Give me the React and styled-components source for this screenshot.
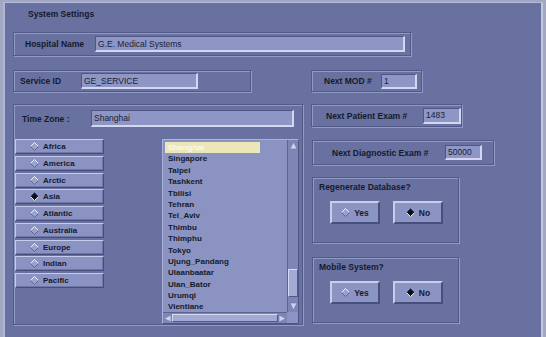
import React from "react";
import styled, { createGlobalStyle } from "styled-components";

const GlobalStyle = createGlobalStyle`
  html, body {
    margin: 0;
    padding: 0;
  }
  body {
    background: #a3a8c0;
    font-family: "Liberation Sans", Arial, sans-serif;
    font-size: 8.5px;
    color: #151a2c;
  }
`;

const Frame = styled.div`
  box-sizing: border-box;
  width: 540px;
  height: 335px;
  margin: 2px 0 0 3px;
  padding-left: 8px;
  background: #6871a0;
  border-top: 1px solid #b4bbe2;
  border-left: 2px solid #aeb5dc;
  border-right: 2px solid #c3c7db;
  display: flex;
  flex-direction: column;
`;

const Title = styled.div`
  margin: 6px 0 0 15px;
  line-height: 10px;
  font-weight: bold;
`;

const Etched = styled.div`
  box-sizing: border-box;
  width: ${(p) => p.$w}px;
  height: ${(p) => p.$h}px;
  margin: ${(p) => p.$mt || 0}px 0 0 ${(p) => p.$ml || 0}px;
  border: 1px solid #525a8a;
  box-shadow: 1px 1px 0 #9199c7, inset 1px 1px 0 #9199c7;
  flex-shrink: 0;
`;

const FieldBox = styled(Etched)`
  display: flex;
  align-items: center;
  padding-left: ${(p) => p.$pl}px;
`;

const Label = styled.span`
  width: ${(p) => p.$w}px;
  flex-shrink: 0;
  font-weight: bold;
  line-height: 10px;
  white-space: nowrap;
`;

const Input = styled.div`
  box-sizing: border-box;
  width: ${(p) => p.$w}px;
  height: ${(p) => p.$h || 16}px;
  padding-left: 2px;
  display: flex;
  align-items: center;
  background: #8d96c5;
  border-top: 1px solid #4f5786;
  border-left: 1px solid #4f5786;
  border-right: 2px solid #d3d8f0;
  border-bottom: 2px solid #d3d8f0;
  color: #1d2236;
  white-space: nowrap;
  overflow: hidden;
`;

const Row = styled.div`
  display: flex;
  align-items: flex-start;
  margin-top: ${(p) => p.$mt || 0}px;
`;

const Group = styled(Etched)`
  display: flex;
  flex-direction: column;
`;

const TzRow = styled.div`
  display: flex;
  align-items: center;
  height: 17px;
  margin: 5px 0 0 8px;
`;

const TzBody = styled.div`
  display: flex;
  align-items: flex-start;
  margin: 12px 0 0 1px;
`;

const RadioColumn = styled.div`
  display: flex;
  flex-direction: column;
  gap: 1.75px;
`;

const RadioTab = styled.div`
  box-sizing: border-box;
  width: 89px;
  height: 15px;
  display: flex;
  align-items: center;
  gap: 4px;
  padding-left: 14px;
  background: #8a93c2;
  border-top: 1px solid #c6cbeb;
  border-left: 1px solid #c6cbeb;
  border-right: 1px solid #454d7c;
  border-bottom: 1px solid #454d7c;
  box-shadow: inset -1px -1px 0 #6e77a7;
  font-size: 8px;
  font-weight: bold;
`;

const ListBox = styled.div`
  box-sizing: border-box;
  width: 137px;
  height: 185px;
  margin-left: 58px;
  display: grid;
  grid-template-columns: 1fr 11px;
  grid-template-rows: 1fr 11px;
  background: #8a93c1;
  border-top: 1px solid #aab2da;
  border-left: 1px solid #aab2da;
  border-right: 1px solid #4d5584;
  border-bottom: 1px solid #4d5584;
`;

const ListItems = styled.div`
  overflow: hidden;
  padding: 2px 0 0 2px;
`;

const ListItem = styled.div`
  width: 95px;
  height: 11.4px;
  line-height: 11.4px;
  padding-left: 3px;
  box-sizing: border-box;
  font-size: 8px;
  font-weight: bold;
  white-space: nowrap;
  background: ${(p) => (p.$sel ? "#ece7b8" : "transparent")};
  color: ${(p) => (p.$sel ? "#fbf8ea" : "#151a2c")};
`;

const VScroll = styled.div`
  display: flex;
  flex-direction: column;
  background: #7d86b4;
  border-left: 1px solid #5b6392;
`;

const HScroll = styled.div`
  display: flex;
  background: #7d86b4;
  border-top: 1px solid #5b6392;
`;

const Corner = styled.div`
  background: #8a93c1;
`;

const Arrow = styled.div`
  flex-shrink: 0;
  width: ${(p) => p.$w}px;
  height: ${(p) => p.$h}px;
  display: flex;
  align-items: center;
  justify-content: center;
`;

const Track = styled.div`
  flex: 1;
  display: flex;
  flex-direction: ${(p) => (p.$vertical ? "column" : "row")};
`;

const Thumb = styled.div`
  box-sizing: border-box;
  background: #a3abd5;
  border-top: 1px solid #d7dbf2;
  border-left: 1px solid #d7dbf2;
  border-right: 1px solid #4f5786;
  border-bottom: 1px solid #4f5786;
  ${(p) =>
    p.$vertical
      ? `margin-top: ${p.$offset}px; height: ${p.$size}px; width: 100%;`
      : `margin: 1px 0; flex: 1;`}
`;

const RightColumn = styled.div`
  display: flex;
  flex-direction: column;
  margin-left: 8px;
`;

const ChoiceGroup = styled(Etched)`
  padding: 4px 0 0 6px;
`;

const ChoiceRow = styled.div`
  display: flex;
  gap: 13px;
  margin: 9px 0 0 11px;
`;

const ChoiceButton = styled.div`
  box-sizing: border-box;
  width: 50px;
  height: 23px;
  display: flex;
  align-items: center;
  justify-content: center;
  gap: 4px;
  background: #8b94c3;
  border-top: 2px solid #c8cdec;
  border-left: 2px solid #c8cdec;
  border-right: 2px solid #474f7e;
  border-bottom: 2px solid #474f7e;
  font-weight: bold;
`;

const Diamond = ({ on }) => (
  <svg width="9" height="9" viewBox="0 0 9 9">
    <polygon
      points="4.5,0.5 8.5,4.5 4.5,8.5 0.5,4.5"
      fill={on ? "#101018" : "#9aa2cd"}
    />
    <polyline
      points="0.5,4.5 4.5,0.5 8.5,4.5"
      fill="none"
      stroke={on ? "#4a5080" : "#eef0fb"}
      strokeWidth="1"
    />
    <polyline
      points="0.5,4.5 4.5,8.5 8.5,4.5"
      fill="none"
      stroke={on ? "#e6e9f8" : "#5d6592"}
      strokeWidth="1"
    />
  </svg>
);

const Triangle = ({ dir }) => {
  const pts = {
    up: "4.5,1 8,8 1,8",
    down: "1,1 8,1 4.5,8",
    left: "1,4.5 8,1 8,8",
    right: "1,1 8,4.5 1,8",
  }[dir];
  return (
    <svg width="9" height="9" viewBox="0 0 9 9">
      <polygon points={pts} fill="#cdd2ee" stroke="#6a72a2" strokeWidth="0.6" />
    </svg>
  );
};

const regions = [
  "Africa",
  "America",
  "Arctic",
  "Asia",
  "Atlantic",
  "Australia",
  "Europe",
  "Indian",
  "Pacific",
];

const cities = [
  "Shanghai",
  "Singapore",
  "Taipei",
  "Tashkent",
  "Tbilisi",
  "Tehran",
  "Tel_Aviv",
  "Thimbu",
  "Thimphu",
  "Tokyo",
  "Ujung_Pandang",
  "Ulaanbaatar",
  "Ulan_Bator",
  "Urumqi",
  "Vientiane",
];

function YesNo({ title, mt }) {
  return (
    <ChoiceGroup $w={147} $h={66} $mt={mt} $ml={1}>
      <Label>{title}</Label>
      <ChoiceRow>
        <ChoiceButton>
          <Diamond />
          Yes
        </ChoiceButton>
        <ChoiceButton>
          <Diamond on />
          No
        </ChoiceButton>
      </ChoiceRow>
    </ChoiceGroup>
  );
}

export default function App() {
  return (
    <>
      <GlobalStyle />
      <Frame>
        <Title>System Settings</Title>

        <FieldBox $w={398} $h={24} $mt={13} $pl={11}>
          <Label $w={70}>Hospital Name</Label>
          <Input $w={310}>G.E. Medical Systems</Input>
        </FieldBox>

        <Row $mt={14}>
          <FieldBox $w={238} $h={22} $pl={6}>
            <Label $w={61}>Service ID</Label>
            <Input $w={117}>GE_SERVICE</Input>
          </FieldBox>
          <FieldBox $w={111} $h={22} $ml={60} $pl={12}>
            <Label $w={57}>Next MOD #</Label>
            <Input $w={36} $h={15}>1</Input>
          </FieldBox>
        </Row>

        <Row $mt={12}>
          <Group $w={290} $h={221}>
            <TzRow>
              <Label $w={69}>Time Zone :</Label>
              <Input $w={203} $h={17}>Shanghai</Input>
            </TzRow>
            <TzBody>
              <RadioColumn>
                {regions.map((r) => (
                  <RadioTab key={r}>
                    <Diamond on={r === "Asia"} />
                    {r}
                  </RadioTab>
                ))}
              </RadioColumn>
              <ListBox>
                <ListItems>
                  {cities.map((c) => (
                    <ListItem key={c} $sel={c === "Shanghai"}>
                      {c}
                    </ListItem>
                  ))}
                </ListItems>
                <VScroll>
                  <Arrow $w={10} $h={11}>
                    <Triangle dir="up" />
                  </Arrow>
                  <Track $vertical>
                    <Thumb $vertical $offset={118} $size={28} />
                  </Track>
                  <Arrow $w={10} $h={11}>
                    <Triangle dir="down" />
                  </Arrow>
                </VScroll>
                <HScroll>
                  <Arrow $w={9} $h={10}>
                    <Triangle dir="left" />
                  </Arrow>
                  <Track>
                    <Thumb />
                  </Track>
                  <Arrow $w={9} $h={10}>
                    <Triangle dir="right" />
                  </Arrow>
                </HScroll>
                <Corner />
              </ListBox>
            </TzBody>
          </Group>

          <RightColumn>
            <FieldBox $w={151} $h={23} $pl={14}>
              <Label $w={97}>Next Patient Exam #</Label>
              <Input $w={38}>1483</Input>
            </FieldBox>
            <FieldBox $w={182} $h={25} $mt={13} $ml={1} $pl={19}>
              <Label $w={113}>Next Diagnostic Exam #</Label>
              <Input $w={37} $h={15}>50000</Input>
            </FieldBox>
            <YesNo title="Regenerate Database?" mt={12} />
            <YesNo title="Mobile System?" mt={14} />
          </RightColumn>
        </Row>
      </Frame>
    </>
  );
}
